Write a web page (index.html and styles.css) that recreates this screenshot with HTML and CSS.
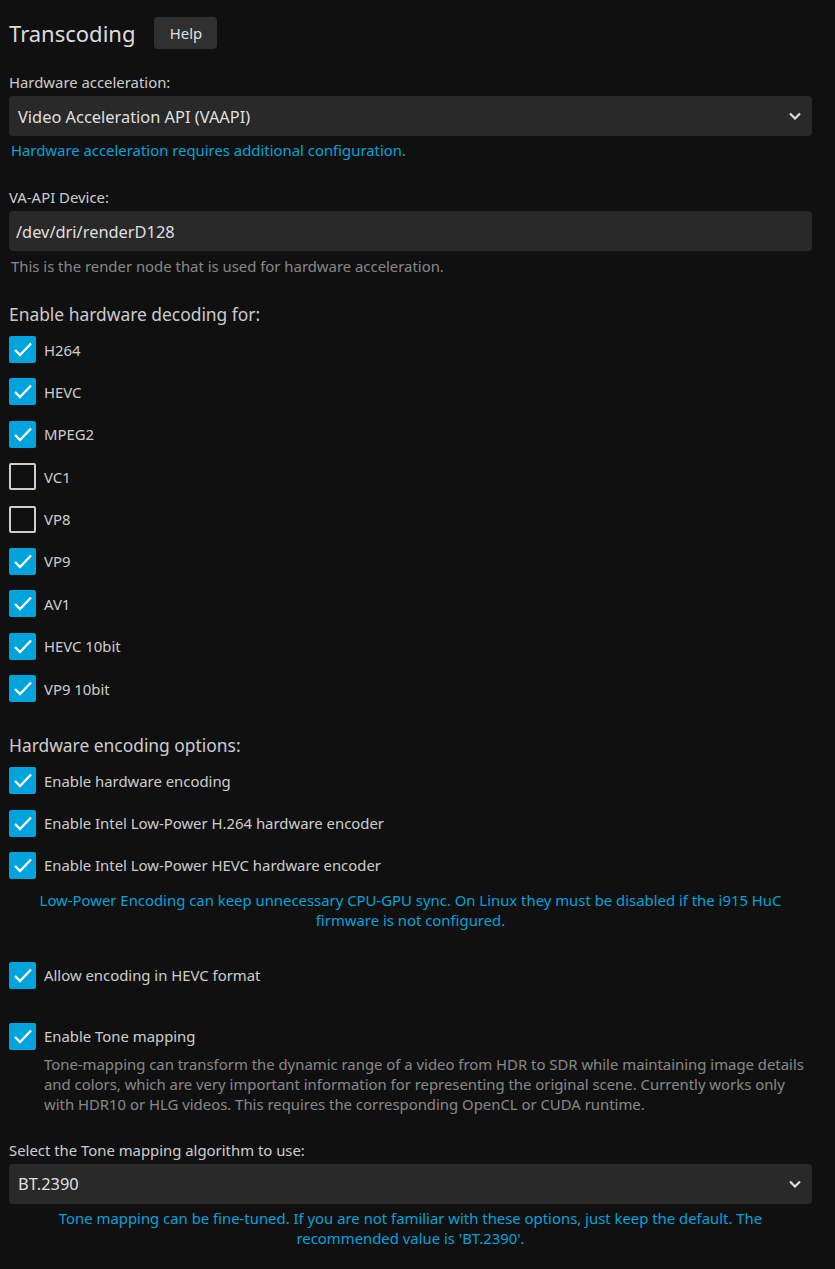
FILE: index.html
```html
<!DOCTYPE html>
<html lang="en">
<head>
<meta charset="utf-8">
<title>Transcoding</title>
<link rel="stylesheet" href="styles.css">
</head>
<body>
<div class="page">
  <div class="header">
    <h2 class="title">Transcoding</h2>
    <button class="btn-help">Help</button>
  </div>

  <div class="field">
    <label class="field-label">Hardware acceleration:</label>
    <div class="select">
      <span>Video Acceleration API (VAAPI)</span>
      <svg class="chev" viewBox="0 0 12 8" width="12" height="8"><path d="M1 1.5l5 5 5-5"/></svg>
    </div>
    <div class="hint-blue">Hardware acceleration requires additional configuration.</div>
  </div>

  <div class="field field-device">
    <label class="field-label">VA-API Device:</label>
    <div class="input">/dev/dri/renderD128</div>
    <div class="hint">This is the render node that is used for hardware acceleration.</div>
  </div>

  <h3 class="section-title">Enable hardware decoding for:</h3>
  <div class="checks">
    <div class="check"><span class="box on"><svg viewBox="0 0 27 27"><path d="M6 14l5 5 11-11.5"/></svg></span><span class="lbl">H264</span></div>
    <div class="check"><span class="box on"><svg viewBox="0 0 27 27"><path d="M6 14l5 5 11-11.5"/></svg></span><span class="lbl">HEVC</span></div>
    <div class="check"><span class="box on"><svg viewBox="0 0 27 27"><path d="M6 14l5 5 11-11.5"/></svg></span><span class="lbl">MPEG2</span></div>
    <div class="check"><span class="box"></span><span class="lbl">VC1</span></div>
    <div class="check"><span class="box"></span><span class="lbl">VP8</span></div>
    <div class="check"><span class="box on"><svg viewBox="0 0 27 27"><path d="M6 14l5 5 11-11.5"/></svg></span><span class="lbl">VP9</span></div>
    <div class="check"><span class="box on"><svg viewBox="0 0 27 27"><path d="M6 14l5 5 11-11.5"/></svg></span><span class="lbl">AV1</span></div>
    <div class="check"><span class="box on"><svg viewBox="0 0 27 27"><path d="M6 14l5 5 11-11.5"/></svg></span><span class="lbl">HEVC 10bit</span></div>
    <div class="check"><span class="box on"><svg viewBox="0 0 27 27"><path d="M6 14l5 5 11-11.5"/></svg></span><span class="lbl">VP9 10bit</span></div>
  </div>

  <h3 class="section-title section-enc">Hardware encoding options:</h3>
  <div class="checks">
    <div class="check"><span class="box on"><svg viewBox="0 0 27 27"><path d="M6 14l5 5 11-11.5"/></svg></span><span class="lbl">Enable hardware encoding</span></div>
    <div class="check"><span class="box on"><svg viewBox="0 0 27 27"><path d="M6 14l5 5 11-11.5"/></svg></span><span class="lbl">Enable Intel Low-Power H.264 hardware encoder</span></div>
    <div class="check"><span class="box on"><svg viewBox="0 0 27 27"><path d="M6 14l5 5 11-11.5"/></svg></span><span class="lbl">Enable Intel Low-Power HEVC hardware encoder</span></div>
  </div>
  <div class="hint-blue center lp">Low-Power Encoding can keep unnecessary CPU-GPU sync. On Linux they must be disabled if the i915 HuC firmware is not configured.</div>

  <div class="check single hevc"><span class="box on"><svg viewBox="0 0 27 27"><path d="M6 14l5 5 11-11.5"/></svg></span><span class="lbl">Allow encoding in HEVC format</span></div>

  <div class="check single tone"><span class="box on"><svg viewBox="0 0 27 27"><path d="M6 14l5 5 11-11.5"/></svg></span><span class="lbl">Enable Tone mapping</span></div>
  <div class="check-desc">Tone-mapping can transform the dynamic range of a video from HDR to SDR while maintaining image details and colors, which are very important information for representing the original scene. Currently works only with HDR10 or HLG videos. This requires the corresponding OpenCL or CUDA runtime.</div>

  <div class="field field-tone">
    <label class="field-label">Select the Tone mapping algorithm to use:</label>
    <div class="select">
      <span>BT.2390</span>
      <svg class="chev" viewBox="0 0 12 8" width="12" height="8"><path d="M1 1.5l5 5 5-5"/></svg>
    </div>
    <div class="hint-blue center">Tone mapping can be fine-tuned. If you are not familiar with these options, just keep the default. The recommended value is 'BT.2390'.</div>
  </div>
</div>
</body>
</html>
```

FILE: styles.css
```css
html, body {
  margin: 0;
  padding: 0;
  background: #101010;
}
body {
  font-family: "Noto Sans", "Open Sans", sans-serif;
  color: rgba(255, 255, 255, 0.8);
  font-size: 14.88px;
}
.page {
  padding: 17px 23px 0 9px;
}
.header {
  display: flex;
  align-items: center;
  gap: 19px;
  height: 32px;
}
.title {
  margin: 0;
  font-size: 22px;
  font-weight: 400;
  color: rgba(255, 255, 255, 0.87);
  line-height: 32px;
}
.btn-help {
  font-family: inherit;
  font-size: 14.88px;
  color: rgba(255, 255, 255, 0.87);
  background: #303030;
  border: 0;
  border-radius: 4px;
  width: 63px;
  height: 32px;
  padding: 0;
}
.field {
  margin-top: 23px;
}
.field-label {
  display: block;
  line-height: 20px;
}
.select, .input {
  margin-top: 4px;
  height: 40px;
  background: #292929;
  border-radius: 4px;
  display: flex;
  align-items: center;
  font-size: 16.4px;
  color: rgba(255, 255, 255, 0.87);
}
.select {
  justify-content: space-between;
  padding: 0 11px 0 9px;
}
.input {
  padding: 0 7px;
}
.chev {
  fill: none;
  stroke: #ddd;
  stroke-width: 2.2;
}
.hint-blue {
  color: #00a4dc;
  line-height: 20px;
  margin-top: 4px;
  padding-left: 2px;
}
.hint-blue.center {
  text-align: center;
  padding: 0 20px;
}
.hint {
  color: rgba(255, 255, 255, 0.5);
  line-height: 20px;
  margin-top: 5px;
  padding-left: 2px;
}
.field-device {
  margin-top: 27px;
}
.section-title {
  margin: 26px 0 0;
  font-size: 17.4px;
  font-weight: 400;
  line-height: 24px;
}
.section-enc {
  margin-top: 31px;
}
.checks {
  display: flex;
  flex-direction: column;
  gap: 15.4px;
  margin-top: 10px;
}
.check {
  display: flex;
  align-items: center;
  height: 27px;
  gap: 8px;
}
.box {
  width: 27px;
  height: 27px;
  box-sizing: border-box;
  border: 2px solid rgba(255, 255, 255, 0.8);
  border-radius: 2px;
  flex: none;
  position: relative;
}
.box.on {
  background: #00a4dc;
  border-color: #00a4dc;
}
.box svg {
  position: absolute;
  left: -2px;
  top: -2px;
  width: 27px;
  height: 27px;
  fill: none;
  stroke: #fff;
  stroke-width: 2.4;
}
.lp {
  margin-top: 11px;
}
.hevc {
  margin-top: 32px;
}
.tone {
  margin-top: 34px;
}
.check-desc {
  margin: 4px 0 0 35px;
  color: rgba(255, 255, 255, 0.5);
  line-height: 20px;
}
.field-tone {
  margin-top: 26px;
}
```
